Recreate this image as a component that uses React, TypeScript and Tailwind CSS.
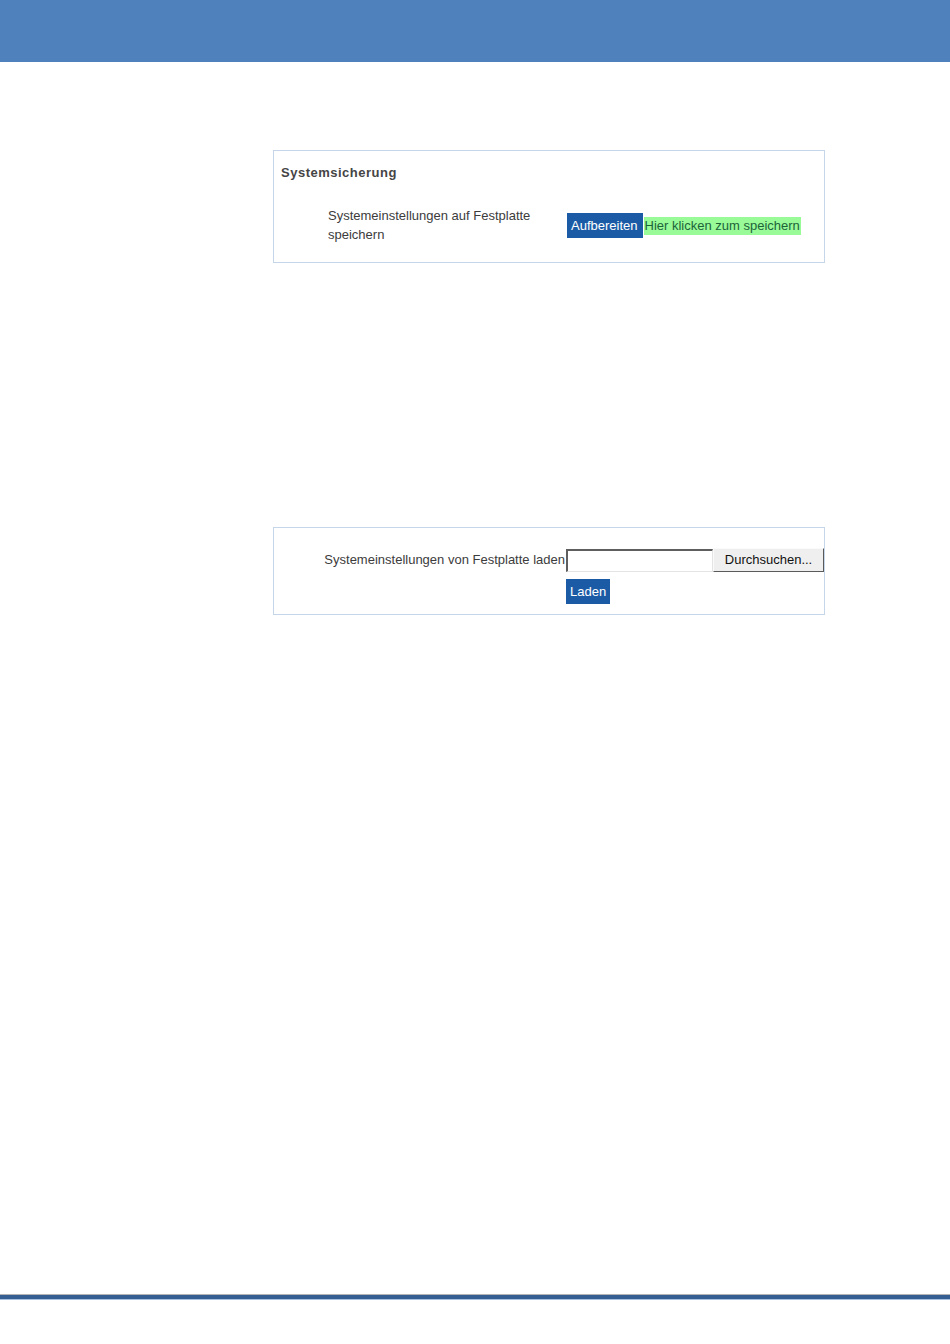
export default function App() {
  return (
    <div className="min-h-[1344px] flex flex-col bg-white font-['Liberation_Sans',Arial,sans-serif] text-[13px] text-[#3a3a3a]">
      {/* Kopfleiste */}
      <header className="h-[62px] bg-[#4f81bd]" />

      <main className="flex-1 pl-[273px] pt-[88px]">
        {/* Systemsicherung */}
        <section className="w-[552px] h-[113px] border border-[#c5d5ea]">
          <h2 className="pt-[14px] pl-[7px] text-[13px] leading-[16px] font-bold tracking-[0.5px] text-[#454545]">
            Systemsicherung
          </h2>
          <div className="flex items-center mt-[25px] pl-[54px]">
            <p className="w-[239px] leading-[19px] text-[#3c3c3c]">
              Systemeinstellungen auf Festplatte speichern
            </p>
            <button className="h-[25px] pl-[4px] pr-[5px] bg-[#1b5ba6] text-white leading-[25px]">
              Aufbereiten
            </button>
            <a className="ml-px px-px leading-[18px] bg-[#98fb98] text-[#1c6338] mt-[2px]">
              Hier klicken zum speichern
            </a>
          </div>
        </section>

        {/* Laden */}
        <section className="mt-[264px] w-[552px] h-[88px] border border-[#c5d5ea] pt-[20px]">
          <div className="flex items-center">
            <label className="w-[292px] text-right pr-px text-[#3c3c3c] leading-[16px]">
              Systemeinstellungen von Festplatte laden
            </label>
            <input
              type="text"
              className="w-[147px] h-[23px] bg-white border-t-2 border-l-2 border-b border-r border-t-[#5e5e5e] border-l-[#5e5e5e] border-b-[#e4e4e4] border-r-[#e4e4e4] outline-none"
            />
            <button className="w-[111px] h-[24px] bg-[#efefef] border border-t-[#fafafa] border-l-[#fafafa] border-b-[#5a5a5a] border-r-[#5a5a5a] text-[#111] leading-[20px]">
              Durchsuchen...
            </button>
          </div>
          <div className="pl-[292px] mt-[7px]">
            <button className="h-[25px] px-[4px] bg-[#1b5ba6] text-white leading-[25px]">
              Laden
            </button>
          </div>
        </section>
      </main>

      {/* Fußlinie */}
      <footer className="mb-[44px]">
        <div className="h-px bg-[#b4b4b4]" />
        <div className="h-[4px] bg-[#355f92]" />
        <div className="h-px bg-[#a9c1de]" />
      </footer>
    </div>
  );
}
